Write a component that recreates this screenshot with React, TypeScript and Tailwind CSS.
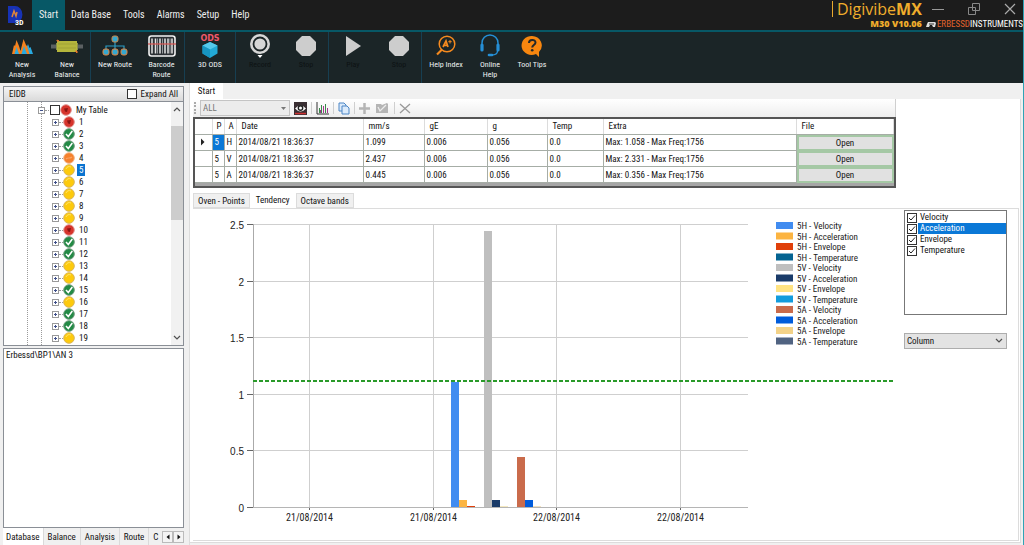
import React from "react";

type Status = "red" | "green" | "orange" | "yellow";

const menus = ["Data Base", "Tools", "Alarms", "Setup", "Help"];

const nodes: [number, Status][] = [
  [1, "red"], [2, "green"], [3, "green"], [4, "orange"], [5, "yellow"], [6, "yellow"],
  [7, "yellow"], [8, "yellow"], [9, "yellow"], [10, "red"], [11, "green"], [12, "green"],
  [13, "yellow"], [14, "yellow"], [15, "green"], [16, "yellow"], [17, "green"],
  [18, "green"], [19, "yellow"],
];

const rows = [
  ["H", "1.099", "1.058"],
  ["V", "2.437", "2.331"],
  ["A", "0.445", "0.356"],
];

const legend: [string, string][] = [
  ["5H - Velocity", "#418cf0"], ["5H - Acceleration", "#fcb441"],
  ["5H - Envelope", "#e0400a"], ["5H - Temperature", "#056492"],
  ["5V - Velocity", "#bfbfbf"], ["5V - Acceleration", "#1a3b69"],
  ["5V - Envelope", "#ffe382"], ["5V - Temperature", "#129cdd"],
  ["5A - Velocity", "#ca6b4b"], ["5A - Acceleration", "#005cdb"],
  ["5A - Envelope", "#f3d288"], ["5A - Temperature", "#506381"],
];

function AnalysisIcon() {
  return (
    <svg width="22" height="20" viewBox="0 0 22 20">
      <path d="M13 18 17 8l1.500 4 1-1 2.500 7z" fill="#29abe2" />
      <path d="M1 18 3 9l1 1 1.500-6L8 10l1.500 5L12.500 3l2.500 6 1 1 2.500 8z" fill="#f5821f" />
      <path d="m5.500 11 2.500 7H3.500z" fill="#29abe2" />
      <path d="m13 10 3 8h-5.500z" fill="#29abe2" />
    </svg>
  );
}

function BalanceIcon() {
  return (
    <svg width="32" height="20" viewBox="0 0 32 20">
      <path d="M0 8.500h32v4H0z" fill="#5b6062" />
      <path d="M5 7h3v7H5zM24 7h3v7h-3z" fill="#8a8f4c" />
      <path d="M6 5h20v11H6z" fill="#b5b63c" />
      <path d="M7 8h18M7 12h18" stroke="#9a9c34" strokeWidth="0.700" />
      <path d="m6 4 2 1H6zM24.500 15h1.500v2z" fill="#e8772a" stroke="#e8772a" />
    </svg>
  );
}

function RouteIcon() {
  return (
    <svg width="26" height="22" viewBox="0 0 26 22" fill="#35a7cf">
      <path d="M13 6v10M4 15v-4h18v4" fill="none" stroke="#2b9cc4" strokeWidth="1.200" />
      <rect x="10" y="1" width="6" height="6" rx="2" stroke="#c98a4b" />
      <rect x="1" y="14" width="6" height="6" rx="2" stroke="#e8833a" />
      <rect x="10" y="14" width="6" height="6" rx="2" stroke="#e8833a" />
      <rect x="19" y="14" width="6" height="6" rx="2" stroke="#e8833a" />
    </svg>
  );
}

function BarcodeIcon() {
  return (
    <svg width="28" height="22" viewBox="0 0 28 22">
      <rect x="1" y="1" width="26" height="20" rx="2.500" fill="#2b3034" stroke="#f2f2f2" strokeWidth="1.600" />
      <path d="M4 3.500v15M7.500 3.500v15M12 3.500v15M17 3.500v15M20 3.500v15M24 3.500v15" stroke="#e4e4e4" strokeWidth="1.500" />
      <path d="M9.500 3.500v15M14.500 3.500v15M22 3.500v15" stroke="#aeb2b5" strokeWidth="0.800" />
      <path d="M0 9h28" stroke="#d9534f" strokeWidth="1.200" />
    </svg>
  );
}

function OdsIcon() {
  return (
    <svg width="24" height="26" viewBox="0 0 24 26">
      <text x="12" y="8" textAnchor="middle" fontSize="8" fontWeight="700" fill="#f0596b" className="font-['DejaVu_Sans',sans-serif]">ODS</text>
      <path d="m12 9 7.500 3.500v8L12 25l-7.500-4.500v-8z" fill="#22a9d6" />
      <path d="m12 9 7.500 3.500L12 16.500l-7.500-4z" fill="#55c8ea" />
      <path d="M12 16.500V25l-7.500-4.500v-8z" fill="#1795c2" />
    </svg>
  );
}

function RecordIcon() {
  return (
    <svg width="22" height="26" viewBox="0 0 22 26">
      <circle cx="11" cy="11" r="10" fill="#d6d6d6" />
      <circle cx="11" cy="11" r="6.500" fill="#d6d6d6" stroke="#1b2426" strokeWidth="1.800" />
      <path d="M8.500 22h5L11 25z" fill="#fff" />
    </svg>
  );
}

function StopIcon() {
  return (
    <svg width="22" height="22" viewBox="0 0 22 22">
      <path d="M7 1h8l6 6v8l-6 6H7l-6-6V7z" fill="#cdcdcd" />
    </svg>
  );
}

function PlayIcon() {
  return (
    <svg width="18" height="22" viewBox="0 0 18 22">
      <path d="M2 1 17 11 2 21z" fill="#cdcdcd" />
    </svg>
  );
}

function HelpIndexIcon() {
  return (
    <svg width="20" height="22" viewBox="0 0 20 22">
      <circle cx="11" cy="9" r="7.800" fill="none" stroke="#f58a1f" strokeWidth="1.500" />
      <path d="m6 14.500-5 5" stroke="#f58a1f" strokeWidth="2.200" />
      <path d="m7 12 3-6 2 6M8.500 10.300h3" fill="none" stroke="#f58a1f" strokeWidth="1.700" />
      <path d="M14 5v3.500M12.300 6.700h3.400" stroke="#f58a1f" />
    </svg>
  );
}

function HeadsetIcon() {
  return (
    <svg width="22" height="24" viewBox="0 0 22 24" fill="none" stroke="#258fd6">
      <path d="M3 11V9a8 8 0 0 1 16 0v2" strokeWidth="1.500" />
      <path d="M3 11v5M19 11v5" strokeWidth="3.200" strokeLinecap="round" />
      <path d="M18.500 17c0 3-2 4-6 4" strokeWidth="1.300" />
      <path d="M10 21h3" strokeWidth="2.600" strokeLinecap="round" />
    </svg>
  );
}

function TipsIcon() {
  return (
    <svg width="22" height="23" viewBox="0 0 22 23">
      <path d="M11 1a10 9.500 0 1 0 4 18l3 3v-5A10 9.500 0 0 0 11 1z" fill="#f7860f" />
      <path d="M8 8c0-4 6.500-4 6.500-.5 0 2.500-3.300 2.500-3.300 5" fill="none" stroke="#22282a" strokeWidth="2" />
      <circle cx="11.200" cy="15.300" r="1.300" fill="#22282a" />
    </svg>
  );
}

function Tool({ icon, label, width, off }: { icon: React.ReactNode; label: string; width: string; off?: boolean }) {
  return (
    <button disabled={off} className={`flex h-full shrink-0 flex-col items-center ${width}`}>
      <span className="flex h-7 items-center justify-center">{icon}</span>
      <span className={`text-center text-[8px] leading-[10px] whitespace-pre ${off ? "text-[#0d1213]" : "text-[#eef2f2]"}`}>{label}</span>
    </button>
  );
}

function Group({ children }: { children: React.ReactNode }) {
  return <div className="flex h-full shrink-0 border-r border-[#173f52]">{children}</div>;
}

function Dot({ status }: { status: Status }) {
  const fill = { red: "#d6342c", green: "#238a45", orange: "#f5812d", yellow: "#fdca0c" }[status];
  const ring = { red: "#e2938f", green: "#6f9c7d", orange: "#f3b184", yellow: "#d9b458" }[status];
  return (
    <svg width="12" height="12" viewBox="0 0 12 12" className="shrink-0">
      <circle cx="6" cy="6" r="5.300" fill={fill} stroke={ring} strokeWidth="1" />
      {status === "green" && <path d="m3 6 2.300 2.500L9.300 3" fill="none" stroke="#fff" strokeWidth="1.600" />}
      {status === "red" && <path d="M4 4.500 8 4 7 8 5 7.500z" fill="#8a1512" />}
      {status === "orange" && <path d="M3 7c2-2 4 0 6-2" fill="none" stroke="#f9a263" strokeWidth="1.200" />}
      {status === "yellow" && <path d="M3 5a3.500 3.500 0 0 1 5-2" fill="none" stroke="#ffe46b" strokeWidth="1" />}
    </svg>
  );
}

function Expander({ open }: { open?: boolean }) {
  return (
    <svg width="7" height="7" viewBox="0 0 7 7" className="shrink-0">
      <rect x="0.500" y="0.500" width="6" height="6" fill="#fff" stroke="#9a9a9a" />
      <path d={open ? "M2 3.500h3" : "M2 3.500h3M3.500 2v3"} stroke="#3f4f8a" />
    </svg>
  );
}

function Tree() {
  return (
    <div className="flex min-h-0 flex-1 overflow-hidden border border-t-0 border-[#8a8f96] bg-white">
      <div className="ml-[23px] shrink-0 border-l border-dotted border-[#9a9a9a]" />
      <ul className="ml-[13px] flex-1 border-l border-dotted border-[#9a9a9a] pt-0.5">
        <li className="-ml-1 flex h-3 items-center">
          <Expander open />
          <span className="w-1 border-t border-dotted border-[#9a9a9a]" />
          <input type="checkbox" aria-label="My Table" className="ml-px size-2.5 appearance-none border border-[#333] bg-white" />
          <Dot status="red" />
          <span className="ml-1">My Table</span>
        </li>
        {nodes.map(([n, status]) => (
          <li key={n} className="ml-2.5 flex h-3 items-center">
            <Expander />
            <span className="w-1 border-t border-dotted border-[#9a9a9a]" />
            <Dot status={status} />
            <span className={`ml-0.5 px-0.5 leading-3 ${n === 5 ? "bg-[#0a74d1] text-white" : ""}`}>{n}</span>
          </li>
        ))}
      </ul>
      <div className="flex w-3 shrink-0 flex-col items-center bg-[#f1f1f1] py-1">
        <Chevron up />
        <div className="mt-3.5 h-[94px] w-full bg-[#cdcdcd]" />
        <div className="flex-1" />
        <Chevron />
      </div>
    </div>
  );
}

function Chevron({ up }: { up?: boolean }) {
  return (
    <svg width="8" height="6" viewBox="0 0 8 6" className="shrink-0">
      <path d={up ? "m1 5 3-3 3 3" : "m1 1 3 3 3-3"} fill="none" stroke="#505050" strokeWidth="1.200" />
    </svg>
  );
}

function Sidebar() {
  return (
    <aside className="flex w-[190px] shrink-0 flex-col border-r border-[#dcdcdc] bg-[#f0f0f0] pr-[5px] pl-[3px] pt-[3px]">
      <div className="flex h-4 shrink-0 items-center border border-[#8a8f96] bg-gradient-to-b from-[#f4f4f4] to-[#dadada] px-[5px]">
        <span className="flex-1">EIDB</span>
        <label className="flex items-center gap-1">
          <input type="checkbox" className="size-2.5 appearance-none border border-[#333] bg-white" />
          Expand All
        </label>
      </div>
      <Tree />
      <textarea aria-label="Path" defaultValue={"Erbessd\\BP1\\AN 3"} className="mt-0.5 h-[180px] shrink-0 resize-none border border-[#8a8f96] bg-white px-0.5 leading-3" />
      <div className="flex h-[17px] shrink-0 items-center">
        <button className="h-full bg-white px-[3px]">Database</button>
        {["Balance", "Analysis", "Route", "C"].map((t) => (
          <button key={t} className="h-full border-l border-[#dadada] px-1">{t}</button>
        ))}
        <div className="ml-auto flex">
          <button aria-label="Previous tabs" className="flex h-3 w-[11px] items-center justify-center border border-[#bbb] bg-[#f4f4f4]"><svg width="4" height="6" viewBox="0 0 4 6"><path d="M3.500.5v5L.5 3z" fill="#111" /></svg></button>
          <button aria-label="Next tabs" className="flex h-3 w-[11px] items-center justify-center border border-[#bbb] bg-[#f4f4f4]"><svg width="4" height="6" viewBox="0 0 4 6"><path d="M.5.5v5l3-2.500z" fill="#111" /></svg></button>
        </div>
      </div>
    </aside>
  );
}

function Grid() {
  const cell = "border-r border-b border-[#a6ada6] px-0.5 font-normal";
  return (
    <div className="w-[703px] border-2 border-[#555] bg-white">
      <table className="w-full table-fixed border-collapse text-left">
        <colgroup>
          <col className="w-[17px]" /><col className="w-3" /><col className="w-3" /><col className="w-[127px]" />
          <col className="w-[61px]" /><col className="w-[63px]" /><col className="w-[60px]" /><col className="w-14" />
          <col className="w-[193px]" /><col />
        </colgroup>
        <thead>
          <tr className="h-[15px]">
            {["", "P", "A", "Date", "mm/s", "gE", "g", "Temp", "Extra", "File"].map((h, i) => (
              <th key={i} className={`border-r border-b border-r-[#dcdcdc] border-b-[#a6ada6] font-normal ${i < 3 ? "px-1" : "px-[5px]"}`}>{h}</th>
            ))}
          </tr>
        </thead>
        <tbody>
          {rows.map(([axis, v, max], i) => (
            <tr key={axis} className="h-4">
              <td className={cell}>{i === 0 && <svg width="12" height="8" viewBox="0 0 12 8"><path d="m4 .5 3.500 3.500L4 7.500z" fill="#222" /></svg>}</td>
              <td className={`${cell} ${i === 0 ? "bg-[#0a78d7] text-white" : ""}`}>5</td>
              <td className={cell}>{axis}</td>
              <td className={cell}>2014/08/21 18:36:37</td>
              <td className={cell}>{v}</td>
              <td className={cell}>0.006</td>
              <td className={cell}>0.056</td>
              <td className={cell}>0.0</td>
              <td className={cell}>Max: {max} - Max Freq:1756</td>
              <td className="p-0"><button className="block h-4 w-full border-2 border-[#a5c8a5] bg-[#e1e1e1] leading-3">Open</button></td>
            </tr>
          ))}
        </tbody>
      </table>
      <div className="h-[3px] bg-[#a6a6a6]" />
    </div>
  );
}

function Toolbar() {
  const sep = <span className="h-3 w-px bg-[#cfcfcf]" />;
  return (
    <div className="flex h-[18px] w-[703px] items-center gap-1 border-r border-[#cfcfcf] bg-gradient-to-b from-white to-[#eeeeee] pl-px">
      <span className="h-3 border-l-2 border-dotted border-[#aaa]" />
      <div className="grid w-[90px] items-center">
        <select aria-label="Filter" disabled className="col-start-1 row-start-1 h-4 appearance-none border border-[#c4c4c4] bg-[#ececec] px-0.5 text-[#777] opacity-100"><option>ALL</option></select>
        <svg width="5" height="3" viewBox="0 0 5 3" className="col-start-1 row-start-1 mr-1 justify-self-end"><path d="M0 0h5L2.500 3z" fill="#777" /></svg>
      </div>
      <button aria-label="View"><svg width="13" height="13" viewBox="0 0 13 13"><path d="M0 0h13v13H0z" fill="#3a2f33" /><path d="M1 6.500q5.500-6 11 0-5.500 6-11 0z" fill="#fff" /><circle cx="6.500" cy="6" r="2.200" fill="#fff" stroke="#222" strokeWidth="1.400" /><path d="M1 11.500h11" stroke="#c33" strokeWidth="1.500" /></svg></button>
      {sep}
      <button aria-label="Spectrum"><svg width="13" height="13" viewBox="0 0 13 13" fill="none"><path d="M1 0v12h12" stroke="#333" /><path d="M3.500 11V6M5.500 11V3M9.500 11V2" stroke="#3a8a4a" /><path d="M4.500 11V8M7.500 11V4M11.500 11V6" stroke="#a5348f" /></svg></button>
      {sep}
      <button aria-label="Copy"><svg width="12" height="13" viewBox="0 0 12 13" fill="#dcebfb" stroke="#4c86c6"><path d="M1 1h5l2 2v6H1z" /><path d="M4 4h5l2 2v6H4z" /></svg></button>
      {sep}
      <button aria-label="Add"><svg width="11" height="11" viewBox="0 0 11 11"><path d="M5.500 0v11M0 5.500h11" stroke="#b5b5b5" strokeWidth="2.500" /></svg></button>
      <button aria-label="Edit" className="px-0.5"><svg width="12" height="11" viewBox="0 0 12 11"><path d="M0 1h5l1 1 5-2 1 1v9H0z" fill="#b5b5b5" /><path d="m2 4 2 4 6-6" fill="none" stroke="#ececec" strokeWidth="1.300" /></svg></button>
      {sep}
      <button aria-label="Delete"><svg width="12" height="11" viewBox="0 0 12 11"><path d="m1 1 10 9M11 1 1 10" stroke="#999" strokeWidth="1.300" /></svg></button>
    </div>
  );
}

function Chart() {
  const bars: [number, number, string][] = [
    [258, 125, "#418cf0"], [266, 7, "#fcb441"], [274, 1, "#e0400a"],
    [291, 276, "#bfbfbf"], [299, 7, "#1a3b69"], [307, 1, "#f5e9c0"],
    [324, 50, "#ca6b4b"], [332, 7, "#005cdb"], [340, 1, "#f3e2c0"],
  ];
  return (
    <svg viewBox="0 0 703 332" className="w-full" fontSize="9" fill="#222">
      {["2.5", "2", "1.5", "1", "0.5", "0"].map((t, i) => {
        const y = [15.5, 72.5, 128.5, 185.5, 241.5, 298.5][i];
        return (
          <g key={t}>
            <path d={`M60 ${y}H555`} stroke="#cfcfcf" />
            <path d={`M54 ${y}h6`} stroke="#666" />
            <text x="51" y={y + 4} textAnchor="end" fontSize="10" className="font-['Liberation_Sans',sans-serif]">{t}</text>
          </g>
        );
      })}
      {["21/08/2014", "21/08/2014", "22/08/2014", "22/08/2014"].map((t, i) => {
        const x = [116.5, 240.5, 363.5, 487.5][i];
        return (
          <g key={i}>
            <path d={`M${x} 15v283`} stroke="#cfcfcf" />
            <path d={`M${x} 298v3`} stroke="#666" />
            <text x={x} y="312" textAnchor="middle" fontSize="10">{t}</text>
          </g>
        );
      })}
      <path d="M60.500 15v284" stroke="#aaa" />
      {bars.map(([x, h, c]) => <rect key={x} x={x} y={298 - h} width="8" height={h} fill={c} />)}
      <path d="M60 298.500h495" stroke="#b5b5b5" />
      <path d="M60 172h641" stroke="#2a9a2a" strokeWidth="2" strokeDasharray="4 2" />
      {legend.map(([t, c], i) => (
        <g key={t}>
          <rect x="583" y={13 + i * 10.5} width="17" height="7" fill={c} />
          <text x="604" y={20 + i * 10.5}>{t}</text>
        </g>
      ))}
    </svg>
  );
}

function Options() {
  return (
    <div className="mr-[11px] ml-2 w-[103px] shrink-0 pt-px">
      <div className="h-[105px] border border-[#777] bg-white pt-px">
        {["Velocity", "Acceleration", "Envelope", "Temperature"].map((t) => (
          <label key={t} className="flex h-[11px] items-center pl-0.5">
            <span className="grid shrink-0">
              <input type="checkbox" defaultChecked className="col-start-1 row-start-1 size-2.5 appearance-none border border-[#333] bg-white" />
              <svg width="10" height="10" viewBox="0 0 10 10" className="pointer-events-none col-start-1 row-start-1"><path d="m2 5 2 2 4-4.500" fill="none" stroke="#222" /></svg>
            </span>
            <span className={`ml-px flex-1 pl-0.5 leading-[11px] ${t === "Acceleration" ? "bg-[#0a78d7] text-white" : ""}`}>{t}</span>
          </label>
        ))}
      </div>
      <div className="mt-[18px] grid items-center">
        <select aria-label="Chart type" className="col-start-1 row-start-1 h-4 appearance-none border border-[#adadad] bg-[#e3e3e3] px-0.5"><option>Column</option></select>
        <span className="pointer-events-none col-start-1 row-start-1 mr-1 justify-self-end"><Chevron /></span>
      </div>
    </div>
  );
}

export default function App() {
  return (
    <div className="flex h-screen min-h-[545px] flex-col overflow-hidden border-r border-[#2fa3b5] bg-[#f0f0f0] font-['Roboto_Condensed','Liberation_Sans',sans-serif] text-[9px] leading-3 text-[#111]">
      <header className="flex h-8 shrink-0 border-b-2 border-[#075866] bg-[#1c1c1c] text-[#eee]">
        <div className="flex w-8 items-center justify-center">
          <svg width="18" height="22" viewBox="0 0 18 22"><path d="M1 2h7a7 8 0 0 1 0 17H1z" fill="#1732b5" /><path d="m5 13 2-6 2 5 1-4" fill="none" stroke="#e0853a" strokeWidth="1.500" /><text x="8" y="21" fontSize="8" fontWeight="bold" fill="#fff">3D</text></svg>
        </div>
        <nav className="flex text-[10px]">
          <button className="w-[33px] bg-[#075866]">Start</button>
          {menus.map((m) => <button key={m} className="px-1.5">{m}</button>)}
        </nav>
        <div className="ml-auto flex flex-col items-end pr-1">
          <span className="flex h-[18px] items-center">
            <span className="border-l border-[#e8a92e] pl-1 font-['Open_Sans',sans-serif] text-base leading-4 text-[#efad2c]">Digivibe<b>MX</b></span>
          </span>
          <span className="font-['Open_Sans',sans-serif] text-[9px] leading-3 font-extrabold text-[#efad2c]">M30 V10.06</span>
        </div>
        <div className="flex flex-col items-end">
          <div className="flex h-[18px] items-center gap-6 pr-[7px]">
            <button aria-label="Minimize"><svg width="12" height="12" viewBox="0 0 12 12"><path d="M0 6.500h12" stroke="#999" /></svg></button>
            <button aria-label="Restore"><svg width="12" height="12" viewBox="0 0 12 12" fill="none" stroke="#888"><path d="M4.500.5h7v7h-7zM.5 4.500h7v7h-7z" /></svg></button>
            <button aria-label="Close"><svg width="12" height="12" viewBox="0 0 12 12"><path d="m1 1 10 10M11 1 1 11" stroke="#aaa" strokeWidth="1.200" /></svg></button>
          </div>
          <span className="flex items-center">
            <svg width="11" height="7" viewBox="0 0 11 7"><path d="M2 1h7l1 1-1 4H7L6 4H4L3 6H0l1-3z" fill="#ddd" /><path d="M3 3h5" stroke="#333" /></svg>
            <span className="text-[#e0622c]">ERBESSD</span><span className="text-white">INSTRUMENTS</span>
          </span>
        </div>
      </header>
      <div className="flex h-[51px] shrink-0 bg-[#1b2527]">
        <Group><Tool width="w-11" icon={<AnalysisIcon />} label={"New\nAnalysis"} /><Tool width="w-[46px]" icon={<BalanceIcon />} label={"New\nBalance"} /></Group>
        <Group><Tool width="w-12" icon={<RouteIcon />} label="New Route" /><Tool width="w-[45px]" icon={<BarcodeIcon />} label={"Barcode\nRoute"} /></Group>
        <Group><Tool width="w-[50px]" icon={<OdsIcon />} label="3D ODS" /></Group>
        <Group><Tool width="w-12" off icon={<RecordIcon />} label="Record" /><Tool width="w-11" off icon={<StopIcon />} label="Stop" /></Group>
        <Group><Tool width="w-12" off icon={<PlayIcon />} label="Play" /><Tool width="w-11" off icon={<StopIcon />} label="Stop" /></Group>
        <Tool width="w-12" icon={<HelpIndexIcon />} label="Help Index" /><Tool width="w-10" icon={<HeadsetIcon />} label={"Online\nHelp"} /><Tool width="w-11" icon={<TipsIcon />} label="Tool Tips" />
      </div>
      <div className="flex min-h-0 flex-1">
        <Sidebar />
        <main className="flex min-w-0 flex-1 flex-col">
          <div className="flex h-4 shrink-0"><button className="w-[33px] bg-white">Start</button></div>
          <div className="mr-0.5 mb-0.5 flex min-h-0 flex-1 flex-col border-r border-b border-[#dcdcdc] bg-white pr-px pl-[3px] pb-px">
            <Toolbar />
            <Grid />
            <div className="mt-1 flex h-4 shrink-0 items-end">
              <button className="h-[15px] border border-[#dcdcdc] bg-[#f0f0f0] px-1">Oven - Points</button>
              <button className="h-4 bg-white px-1.5">Tendency</button>
              <button className="h-[15px] border border-[#dcdcdc] bg-[#f0f0f0] px-1">Octave bands</button>
            </div>
            <div className="flex min-h-0 flex-1 border border-l-0 border-[#dcdcdc]">
              <div className="min-w-0 flex-1"><Chart /></div>
              <Options />
            </div>
          </div>
        </main>
      </div>
    </div>
  );
}
